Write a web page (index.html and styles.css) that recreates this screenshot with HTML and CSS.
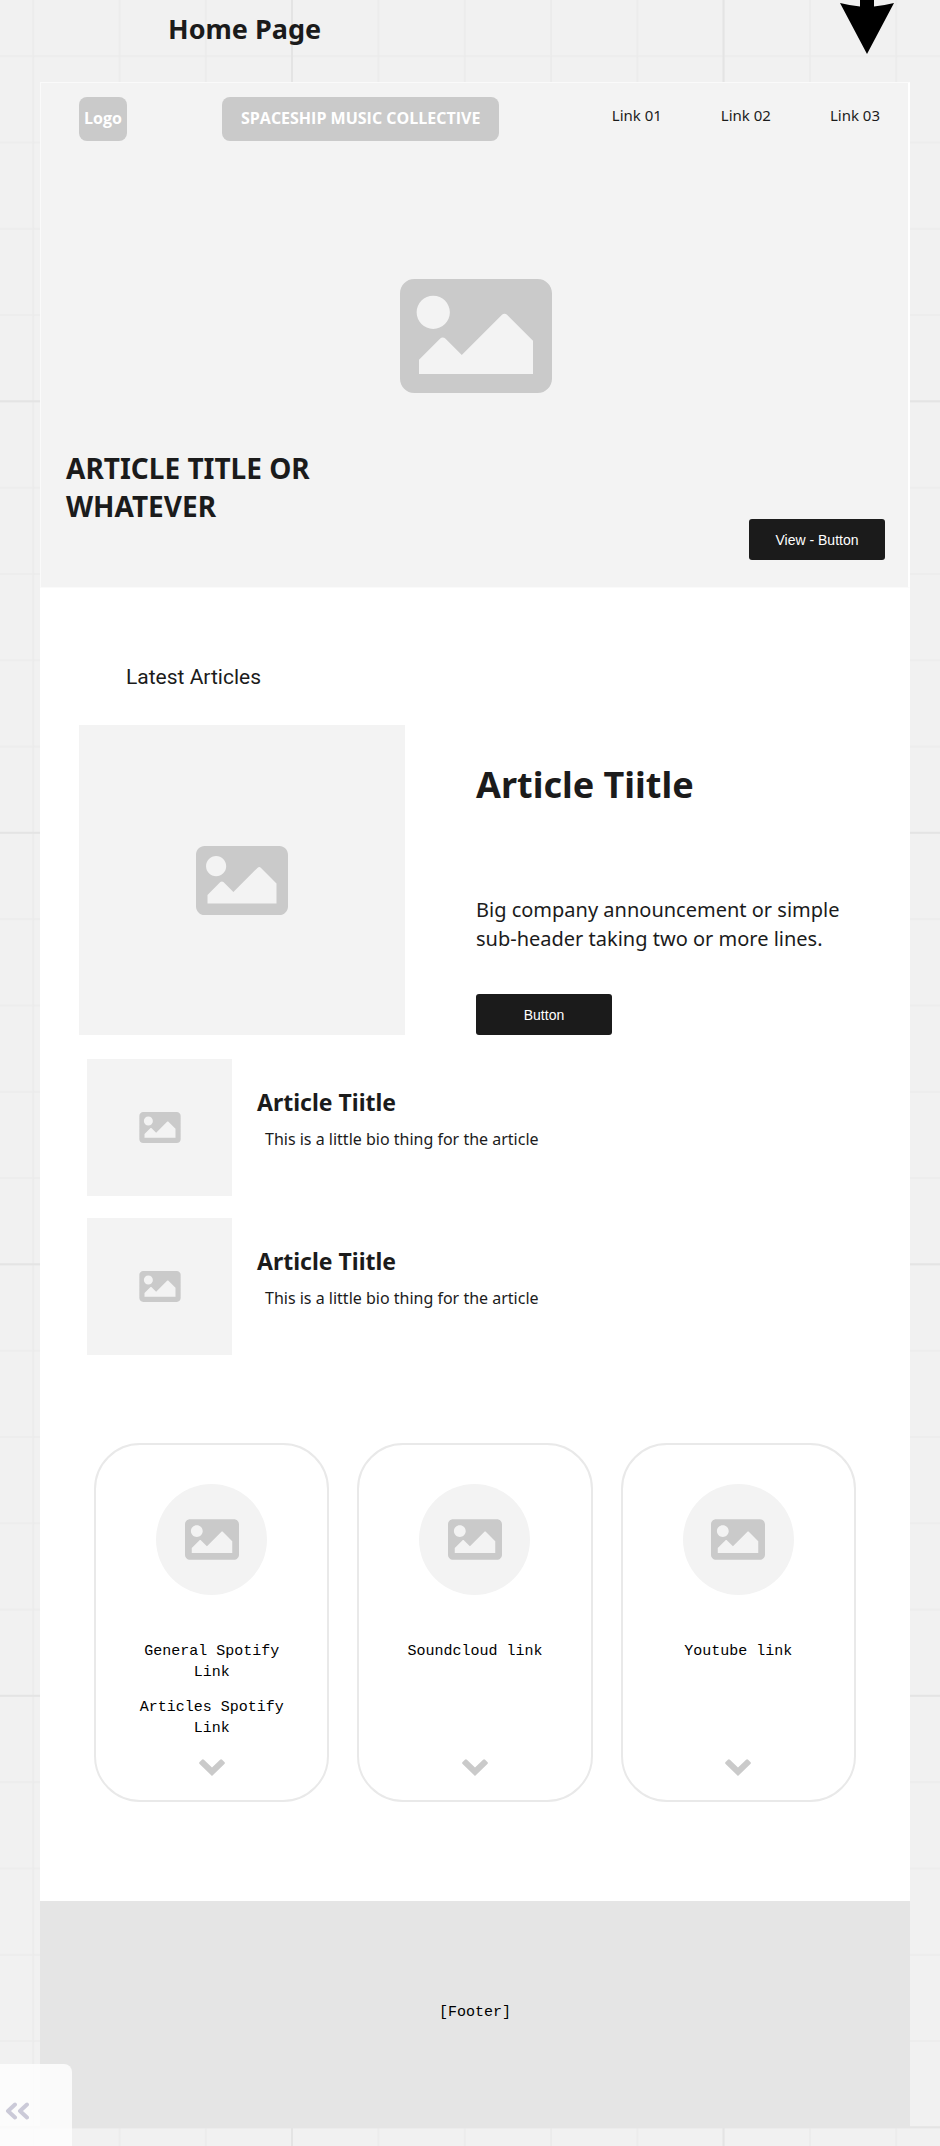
FILE: index.html
```
<!DOCTYPE html>
<html lang="en">
<head>
<meta charset="utf-8">
<meta name="viewport" content="width=device-width, initial-scale=1">
<title>Home Page</title>
<link rel="stylesheet" href="styles.css">
</head>
<body>
<svg class="grid" aria-hidden="true">
  <defs>
    <pattern id="cells" width="86.3" height="86.3" patternUnits="userSpaceOnUse" x="32.2" y="55.2">
      <path d="M0 1H86.3M1 0V86.3" fill="none" stroke="#ebebeb" stroke-width="1.6"/>
    </pattern>
    <pattern id="blocks" width="431.5" height="431.5" patternUnits="userSpaceOnUse" x="291" y="400.3">
      <path d="M0 1H431.5M1 0V431.5" fill="none" stroke="#e4e4e4" stroke-width="2"/>
    </pattern>
    <symbol id="picture" viewBox="0 64 512 384">
      <path d="M464 448H48c-26.51 0-48-21.49-48-48V112c0-26.51 21.49-48 48-48h416c26.51 0 48 21.49 48 48v288c0 26.51-21.49 48-48 48zM112 120c-30.928 0-56 25.072-56 56s25.072 56 56 56 56-25.072 56-56-25.072-56-56-56zM64 384h384V272l-87.515-87.515c-4.686-4.686-12.284-4.686-16.971 0L208 320l-55.515-55.515c-4.686-4.686-12.284-4.686-16.971 0L64 336v48z"/>
    </symbol>
    <symbol id="chevron" viewBox="0 0 26 17">
      <path d="M13 17 .6 4.9Q-.4 3.900.6 2.900L2.900.7Q3.900-.3 4.900.7L13 8.600 21.100.7Q22.100-.3 23.100.7L25.400 2.900Q26.400 3.900 25.400 4.900Z"/>
    </symbol>
  </defs>
  <rect width="100%" height="100%" fill="url(#cells)"/>
  <rect width="100%" height="100%" fill="url(#blocks)"/>
</svg>

<div class="board">
  <div class="board-head">
    <h1 class="board-title">Home Page</h1>
    <svg class="arrow" viewBox="0 0 54 54" aria-hidden="true"><path d="M20 0H34V6.500Q44 5.500 54 3L27 54 0 3Q10 5.500 20 6.500Z"/></svg>
  </div>

  <div class="frame">
    <header class="hero">
      <div class="topbar">
        <span class="chip logo">Logo</span>
        <span class="chip brand">SPACESHIP MUSIC COLLECTIVE</span>
        <nav class="nav">
          <a href="#">Link 01</a>
          <a href="#">Link 02</a>
          <a href="#">Link 03</a>
        </nav>
      </div>
      <div class="hero-picture"><svg class="icon icon-xl" aria-hidden="true"><use href="#picture"/></svg></div>
      <div class="hero-foot">
        <h2 class="hero-title">ARTICLE TITLE OR WHATEVER</h2>
        <button class="button" type="button">View - Button</button>
      </div>
    </header>

    <main class="main">
      <h2 class="section-title">Latest Articles</h2>

      <article class="feature">
        <div class="picture feature-picture"><svg class="icon icon-lg" aria-hidden="true"><use href="#picture"/></svg></div>
        <div class="feature-body">
          <h3 class="feature-title">Article Tiitle</h3>
          <p class="feature-text">Big company announcement or simple sub-header taking two or more lines.</p>
          <button class="button" type="button">Button</button>
        </div>
      </article>

      <div class="list">
        <article class="item">
          <div class="picture item-picture"><svg class="icon icon-sm" aria-hidden="true"><use href="#picture"/></svg></div>
          <div class="item-body">
            <h3 class="item-title">Article Tiitle</h3>
            <p class="item-text">This is a little bio thing for the article</p>
          </div>
        </article>
        <article class="item">
          <div class="picture item-picture"><svg class="icon icon-sm" aria-hidden="true"><use href="#picture"/></svg></div>
          <div class="item-body">
            <h3 class="item-title">Article Tiitle</h3>
            <p class="item-text">This is a little bio thing for the article</p>
          </div>
        </article>
      </div>

      <div class="cards">
        <section class="card">
          <div class="picture avatar"><svg class="icon icon-md" aria-hidden="true"><use href="#picture"/></svg></div>
          <div class="card-text">
            <p>General Spotify Link</p>
            <p>Articles Spotify Link</p>
          </div>
          <svg class="chevron" aria-hidden="true"><use href="#chevron"/></svg>
        </section>
        <section class="card">
          <div class="picture avatar"><svg class="icon icon-md" aria-hidden="true"><use href="#picture"/></svg></div>
          <div class="card-text"><p>Soundcloud link</p></div>
          <svg class="chevron" aria-hidden="true"><use href="#chevron"/></svg>
        </section>
        <section class="card">
          <div class="picture avatar"><svg class="icon icon-md" aria-hidden="true"><use href="#picture"/></svg></div>
          <div class="card-text"><p>Youtube link</p></div>
          <svg class="chevron" aria-hidden="true"><use href="#chevron"/></svg>
        </section>
      </div>
    </main>

    <footer class="footer">[Footer]</footer>
  </div>

  <button class="expand" type="button" aria-label="Expand toolbar">
    <svg class="expand-icon" viewBox="0 0 24 18" aria-hidden="true"><path d="M10 2.500 3 9l7 6.500M22 2.500 15 9l7 6.500"/></svg>
  </button>
</div>
</body>
</html>
```
FILE: styles.css
```
* {
  box-sizing: border-box;
}

body {
  margin: 0;
  background: #f1f1f1;
  color: #1b1b1b;
  font-family: "Noto Sans", "Open Sans", sans-serif;
}

h1, h2, h3, p {
  margin: 0;
}

.board {
  position: relative;
  padding: 0 30px 18px 40px;
}

/* Canvas grid behind the board */
.grid {
  position: absolute;
  inset: 0;
  width: 100%;
  height: 100%;
}

.board-head {
  display: flex;
  justify-content: space-between;
  align-items: flex-start;
  height: 82px;
  padding: 0 16px 0 128px;
}

.board-title {
  padding-top: 10px;
  font-size: 27px;
  line-height: 38px;
}

.arrow {
  width: 54px;
  height: 54px;
}

.frame {
  background: #fff;
}

/* Hero */
.hero {
  padding: 14px 23px 27px 25px;
  border: 1px solid #fafafa;
  border-right: 2px solid #fff;
  background: #f3f3f3;
}

.topbar {
  display: flex;
  align-items: center;
  padding: 0 5px 0 13px;
}

.chip {
  display: flex;
  justify-content: center;
  align-items: center;
  height: 44px;
  padding-bottom: 2px;
  border-radius: 8px;
  background: #cacaca;
  color: #fff;
  font-family: "Open Sans", "Noto Sans", sans-serif;
  font-size: 16px;
  font-weight: 700;
}

.logo {
  width: 48px;
}

.brand {
  margin-left: 95px;
  padding-left: 19px;
  padding-right: 19px;
}

.nav {
  display: flex;
  gap: 59px;
  margin-left: auto;
  padding-bottom: 8px;
  font-size: 15px;
}

.nav a {
  color: inherit;
  text-decoration: none;
}

.hero-picture {
  display: flex;
  justify-content: center;
  padding: 138px 0 56px;
}

.icon {
  display: block;
  fill: #cacaca;
}

.icon-xl {
  width: 152px;
  height: 114px;
}

.icon-lg {
  width: 92px;
  height: 69px;
}

.icon-md {
  width: 54px;
  height: 41px;
}

.icon-sm {
  width: 42px;
  height: 31px;
}

.hero-foot {
  display: flex;
  justify-content: space-between;
  align-items: flex-end;
}

.hero-title {
  max-width: 280px;
  padding-bottom: 35px;
  font-size: 28px;
  line-height: 38px;
}

.button {
  width: 136px;
  height: 41px;
  padding: 0;
  border: 0;
  border-radius: 3px;
  background: #1b1b1b;
  color: #fff;
  font-family: "Liberation Sans", Arial, sans-serif;
  font-size: 14px;
}

/* Articles */
.main {
  padding: 74px 54px 99px 39px;
}

.section-title {
  padding-left: 47px;
  font-family: Roboto, sans-serif;
  font-size: 21px;
  font-weight: 400;
  line-height: 30px;
}

.feature {
  display: flex;
  gap: 71px;
  margin-top: 33px;
}

.picture {
  display: flex;
  flex-shrink: 0;
  justify-content: center;
  align-items: center;
  background: #f3f3f3;
}

.feature-picture {
  width: 326px;
  height: 310px;
}

.feature-body {
  display: flex;
  flex-direction: column;
  justify-content: space-between;
  align-items: flex-start;
  padding-top: 35px;
}

.feature-title {
  font-size: 36px;
  line-height: 50px;
}

.feature-text {
  padding: 49px 0 6px;
  font-size: 20px;
  line-height: 29px;
}

.list {
  display: flex;
  flex-direction: column;
  gap: 22px;
  padding: 24px 8px 0;
}

.item {
  display: flex;
  gap: 25px;
}

.item-picture {
  width: 145px;
  height: 137px;
}

.item-body {
  padding-top: 26px;
}

.item-title {
  font-size: 23px;
  line-height: 34px;
}

.item-text {
  padding: 8px 8px 0;
  font-size: 16px;
  line-height: 24px;
}

/* Service cards */
.cards {
  display: grid;
  grid-template-columns: repeat(3, 1fr);
  gap: 28px;
  padding: 88px 0 0 15px;
}

.card {
  display: flex;
  flex-direction: column;
  align-items: center;
  min-height: 359px;
  padding: 39px 24px 24px;
  border: 2px solid #e9e9e9;
  border-radius: 46px;
}

.avatar {
  width: 111px;
  height: 111px;
  border-radius: 50%;
}

.card-text {
  display: grid;
  gap: 14px;
  max-width: 160px;
  padding: 46px 0 20px;
  color: #000;
  font-family: "Liberation Mono", monospace;
  font-size: 15px;
  line-height: 21px;
  text-align: center;
}

.chevron {
  width: 26px;
  height: 17px;
  margin-top: auto;
  fill: #cacaca;
}

.footer {
  display: flex;
  justify-content: center;
  align-items: center;
  height: 227px;
  padding-bottom: 4px;
  background: #e5e5e5;
  color: #000;
  font-family: "Liberation Mono", monospace;
  font-size: 15px;
}

/* Collapsed toolbar tab lying over the canvas corner */
.expand {
  position: absolute;
  left: 0;
  bottom: 0;
  display: flex;
  align-items: center;
  width: 72px;
  height: 82px;
  padding: 12px 5px 0;
  border: 0;
  border-radius: 0 8px 0 0;
  background: rgba(255, 255, 255, 0.8);
}

.expand-icon {
  width: 24px;
  height: 18px;
  fill: none;
  stroke: #cbcad8;
  stroke-width: 4;
  stroke-linecap: round;
  stroke-linejoin: round;
}
```
